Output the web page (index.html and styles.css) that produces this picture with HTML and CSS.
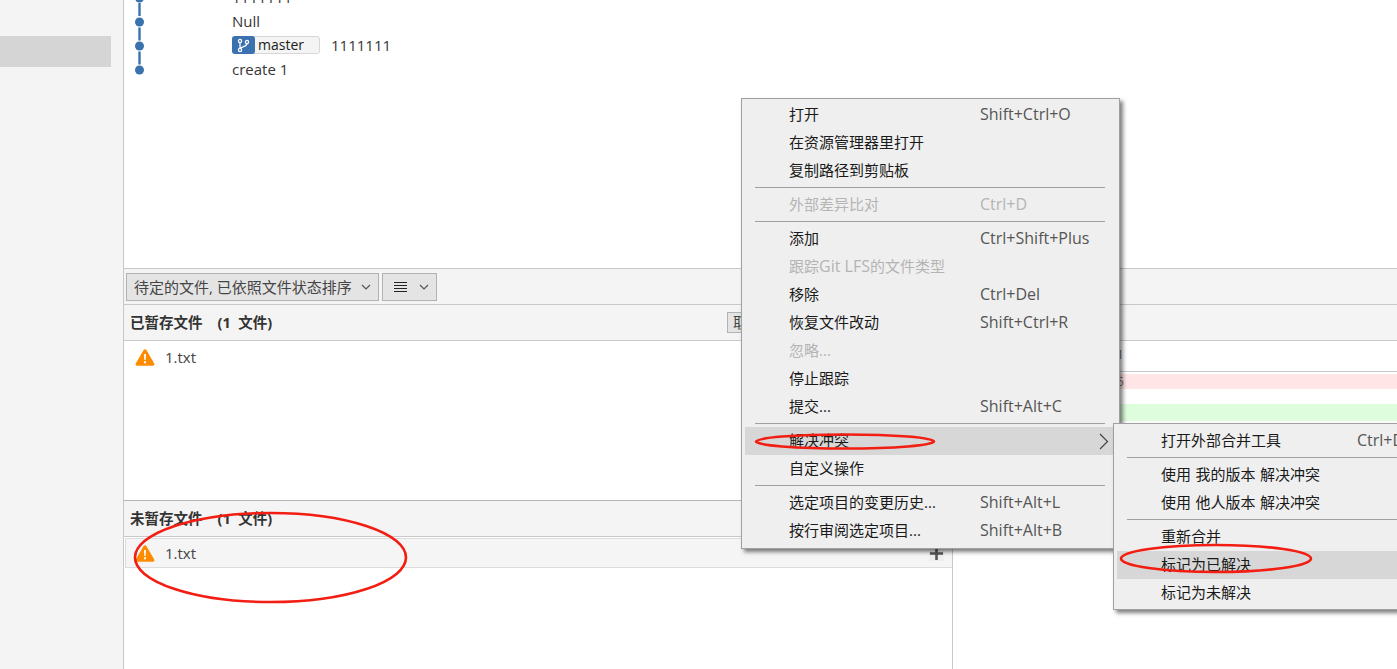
FILE: index.html
```html
<!DOCTYPE html>
<html lang="zh">
<head>
<meta charset="utf-8">
<title>Sourcetree</title>
<link rel="stylesheet" href="styles.css">
</head>
<body>
<div class="app">
  <aside class="sidebar"><div class="side-selected"></div></aside>
  <main class="main">
    <section class="history">
      <svg class="graph" width="32" height="90" viewBox="0 0 32 90" aria-hidden="true">
        <g class="graph-line">
          <line x1="15.5" y1="3" x2="15.5" y2="16"/>
          <line x1="15.5" y1="27.5" x2="15.5" y2="40.5"/>
          <line x1="15.5" y1="51.5" x2="15.5" y2="64.5"/>
        </g>
        <g class="graph-dot">
          <circle cx="15.5" cy="-2" r="4.5"/>
          <circle cx="15.5" cy="22" r="4.5"/>
          <circle cx="15.5" cy="46" r="4.5"/>
          <circle cx="15.5" cy="70" r="4.5"/>
        </g>
      </svg>
      <div class="commits">
        <div class="commit">1111111</div>
        <div class="commit">Null</div>
        <div class="commit">
          <span class="badge">
            <span class="badge-icon">
              <svg width="23" height="18" viewBox="0 0 23 18" fill="none" stroke="#fff" stroke-width="1.3" aria-hidden="true">
                <circle cx="8" cy="5" r="1.6"/><circle cx="15" cy="6" r="1.6"/><circle cx="8" cy="14" r="1.6"/>
                <path d="M8 6.6V12.4M15 7.6C15 11 9.5 10 8.6 12.6"/>
              </svg>
            </span>
            <span class="badge-name">master</span>
          </span>
          <span class="commit-msg">1111111</span>
        </div>
        <div class="commit">create 1</div>
      </div>
    </section>

    <section class="toolbar">
      <div class="select select-wide">
        <span>待定的文件, 已依照文件状态排序</span>
        <svg class="chev" width="10" height="6" viewBox="0 0 10 6" aria-hidden="true"><path d="M1 1l4 4 4-4"/></svg>
      </div>
      <div class="select select-narrow">
        <svg class="burger" width="13" height="12" viewBox="0 0 13 12" aria-hidden="true"><path d="M0 1.5h13M0 4.5h13M0 7.5h13M0 10.5h13"/></svg>
        <svg class="chev" width="10" height="6" viewBox="0 0 10 6" aria-hidden="true"><path d="M1 1l4 4 4-4"/></svg>
      </div>
    </section>

    <section class="split">
      <div class="files">
        <div class="pane-head">
          <strong class="pane-title">已暂存文件&nbsp;&nbsp;&nbsp; (1&nbsp; 文件)</strong>
          <span class="head-btn">取消暂存全部</span>
        </div>
        <div class="file-list staged">
          <div class="file-row">
            <svg class="warn" width="20" height="18" viewBox="0 0 20 18" aria-hidden="true"><path class="warn-bg" d="M10 1.2a1.6 1.6 0 0 1 1.4.8l7.8 13.4a1.5 1.5 0 0 1-1.3 2.3H2.1a1.5 1.5 0 0 1-1.3-2.3L8.6 2a1.6 1.6 0 0 1 1.4-.8z"/><path class="warn-mark" d="M9 6h2l-.3 6h-1.4zM9 13.3h2v2H9z"/></svg>
            <span>1.txt</span>
          </div>
        </div>
        <div class="pane-head unstaged-head">
          <strong class="pane-title">未暂存文件&nbsp;&nbsp;&nbsp; (1&nbsp; 文件)</strong>
        </div>
        <div class="file-list">
          <div class="file-row file-row-active">
            <svg class="warn" width="20" height="18" viewBox="0 0 20 18" aria-hidden="true"><path class="warn-bg" d="M10 1.2a1.6 1.6 0 0 1 1.4.8l7.8 13.4a1.5 1.5 0 0 1-1.3 2.3H2.1a1.5 1.5 0 0 1-1.3-2.3L8.6 2a1.6 1.6 0 0 1 1.4-.8z"/><path class="warn-mark" d="M9 6h2l-.3 6h-1.4zM9 13.3h2v2H9z"/></svg>
            <span>1.txt</span>
            <span class="add-btn">
              <svg width="13" height="13" viewBox="0 0 13 13" aria-hidden="true"><path d="M6.5 0v13M0 6.5h13"/></svg>
            </span>
          </div>
        </div>
      </div>
      <div class="diff">
        <div class="pane-head"></div>
        <div class="hunk"><span class="gutter">1</span></div>
        <div class="diff-line removed"><span class="gutter">5</span></div>
        <div class="diff-line"></div>
        <div class="diff-line added"></div>
      </div>
    </section>
  </main>
</div>

<div class="menu menu-main">
  <div class="mi"><span class="mi-label">打开</span><span class="mi-key">Shift+Ctrl+O</span></div>
  <div class="mi"><span class="mi-label">在资源管理器里打开</span></div>
  <div class="mi"><span class="mi-label">复制路径到剪贴板</span></div>
  <div class="sep"></div>
  <div class="mi off"><span class="mi-label">外部差异比对</span><span class="mi-key">Ctrl+D</span></div>
  <div class="sep"></div>
  <div class="mi"><span class="mi-label">添加</span><span class="mi-key">Ctrl+Shift+Plus</span></div>
  <div class="mi off"><span class="mi-label">跟踪<span class="latin">Git LFS</span>的文件类型</span></div>
  <div class="mi"><span class="mi-label">移除</span><span class="mi-key">Ctrl+Del</span></div>
  <div class="mi"><span class="mi-label">恢复文件改动</span><span class="mi-key">Shift+Ctrl+R</span></div>
  <div class="mi off"><span class="mi-label">忽略...</span></div>
  <div class="mi"><span class="mi-label">停止跟踪</span></div>
  <div class="mi"><span class="mi-label">提交...</span><span class="mi-key">Shift+Alt+C</span></div>
  <div class="sep"></div>
  <div class="mi hot"><span class="mi-label">解决冲突</span>
    <svg class="mi-arrow" width="10" height="17" viewBox="0 0 10 17" aria-hidden="true"><path d="M1 1l7.5 7.5L1 16"/></svg>
  </div>
  <div class="mi"><span class="mi-label">自定义操作</span></div>
  <div class="sep"></div>
  <div class="mi"><span class="mi-label">选定项目的变更历史...</span><span class="mi-key">Shift+Alt+L</span></div>
  <div class="mi"><span class="mi-label">按行审阅选定项目...</span><span class="mi-key">Shift+Alt+B</span></div>
</div>

<div class="menu menu-sub">
  <div class="mi"><span class="mi-label">打开外部合并工具</span><span class="mi-key">Ctrl+D</span></div>
  <div class="sep"></div>
  <div class="mi"><span class="mi-label">使用 我的版本 解决冲突</span></div>
  <div class="mi"><span class="mi-label">使用 他人版本 解决冲突</span></div>
  <div class="sep"></div>
  <div class="mi"><span class="mi-label">重新合并</span></div>
  <div class="mi hot"><span class="mi-label">标记为已解决</span></div>
  <div class="mi"><span class="mi-label">标记为未解决</span></div>
</div>

<svg class="marks" width="1397" height="669" viewBox="0 0 1397 669" aria-hidden="true">
  <ellipse cx="270.5" cy="557.5" rx="135.5" ry="44.5"/>
  <ellipse cx="845" cy="441.5" rx="89" ry="7"/>
  <ellipse cx="1216" cy="558.5" rx="95" ry="13.5"/>
</svg>
</body>
</html>
```

FILE: styles.css
```css
* { box-sizing: border-box; }

html, body {
  margin: 0;
  height: 669px;
  overflow: hidden;
  background: #fff;
}

body {
  position: relative;
  font: 15px/20px "Open Sans", "Noto Sans CJK SC", sans-serif;
  color: #363636;
}

.app {
  display: flex;
  height: 669px;
}

.sidebar {
  width: 124px;
  flex: none;
  padding-top: 36px;
  background: #f4f4f4;
  border-right: 1px solid #c8c8c8;
}

.side-selected {
  width: 111px;
  height: 31px;
  background: #d5d5d5;
}

.main {
  flex: 1;
  min-width: 0;
  display: flex;
  flex-direction: column;
}

.history {
  height: 268px;
  flex: none;
  display: flex;
  overflow: hidden;
}

.graph {
  flex: none;
  overflow: visible;
}

.graph-line line {
  stroke: #3a72ad;
  stroke-width: 2.4;
}

.graph-dot circle {
  fill: #3a72ad;
}

.commits {
  margin: -14px 0 0 76px;
}

.commit {
  height: 24px;
  display: flex;
  align-items: center;
  padding-bottom: 2px;
}

.badge {
  display: flex;
  width: 88px;
  height: 18px;
  border: 1px solid #d6d6d6;
  border-radius: 3px;
  background: #f4f4f4;
  color: #1c1c1c;
  line-height: 16px;
}

.badge-icon {
  width: 23px;
  height: 18px;
  margin: -1px 0 0 -1px;
  flex: none;
  background: #3a71ae;
  border-radius: 3px;
}

.badge-icon svg { display: block; }

.badge-name {
  margin-left: 3px;
  font-size: 14px;
}

.commit-msg { margin-left: 11px; }

.toolbar {
  height: 37px;
  flex: none;
  display: flex;
  gap: 3px;
  padding: 4px 0 0 2px;
  background: #f4f4f4;
  border-top: 1px solid #c8c8c8;
  border-bottom: 1px solid #c8c8c8;
}

.select {
  height: 28px;
  display: flex;
  align-items: center;
  justify-content: space-between;
  background: #e4e4e4;
  border: 1px solid #b2b2b2;
  color: #444;
}

.select-wide { width: 253px; padding: 0 7px; }
.select-narrow { width: 55px; padding: 0 7px 0 11px; }

.chev path {
  fill: none;
  stroke: #555;
  stroke-width: 1.2;
}

.burger path {
  fill: none;
  stroke: #222;
  stroke-width: 1;
}

.split {
  flex: 1;
  min-height: 0;
  display: flex;
}

.files {
  width: 828px;
  flex: none;
  display: flex;
  flex-direction: column;
}

.diff {
  flex: 1;
  min-width: 0;
  border-left: 1px solid #c8c8c8;
}

.pane-head {
  height: 36px;
  display: flex;
  align-items: center;
  justify-content: space-between;
  padding: 0 12px 0 6px;
  background: #f4f4f4;
  border-bottom: 1px solid #c8c8c8;
}

.pane-title {
  font-size: 14.5px;
  font-weight: 700;
  color: #333;
}

.head-btn {
  width: 213px;
  height: 21px;
  padding-left: 5px;
  line-height: 19px;
  background: #e4e4e4;
  border: 1px solid #b2b2b2;
  color: #444;
}

.file-list { flex: none; }

.staged {
  height: 160px;
  border-bottom: 1px solid #b5b5b5;
}

.file-row {
  position: relative;
  height: 30px;
  display: flex;
  align-items: center;
  gap: 10px;
  margin-top: 1px;
  padding-left: 11px;
  color: #444;
}

.file-row-active {
  margin-left: 1px;
  padding-left: 9px;
  background: #f5f5f5;
  border: 1px solid #dcdcdc;
  border-right: 0;
}

.warn-bg { fill: #ff8c00; }
.warn-mark { fill: #fff; }

.add-btn {
  margin-left: auto;
  width: 15px;
  height: 16px;
  margin-right: 8px;
  display: flex;
  align-items: center;
  justify-content: center;
  background: #eee;
}

.add-btn path {
  stroke: #555;
  stroke-width: 2.6;
  fill: none;
}

.hunk {
  height: 31px;
  padding-top: 3px;
  border-bottom: 1px solid #c8c8c8;
  margin-bottom: 2px;
}

.gutter {
  display: block;
  width: 171px;
  text-align: right;
  font-size: 13px;
  line-height: 20px;
  color: #777;
}

.diff-line {
  height: 15px;
}

.diff-line .gutter { line-height: 15px; }

.removed { background: #ffe5e5; }
.added { height: 17px; background: #ddfddd; }

/* context menus sit over the window */
.menu {
  position: absolute;
  background: #efefef;
  border: 1px solid #a0a0a0;
  box-shadow: 3px 3px 4px rgba(0, 0, 0, .5);
  color: #1a1a1a;
}

.menu-main {
  left: 741px;
  top: 98px;
  width: 379px;
  padding: 2px 3px 3px;
}

.menu-sub {
  left: 1113px;
  top: 423px;
  width: 400px;
  padding: 3px 3px 2px;
}

.mi {
  position: relative;
  height: 28px;
  display: flex;
  align-items: center;
  padding: 0 0 2px 44px;
}

.mi-label { width: 191px; flex: none; white-space: nowrap; }

.menu-sub .mi-label { width: 196px; word-spacing: .6px; }

.latin { font-size: 16px; }

.mi-key {
  white-space: nowrap;
  font-size: 16px;
  color: #555;
}

.off,
.off .mi-key { color: #b4b4b4; }

.hot { background: #d7d7d7; }

.mi-arrow {
  position: absolute;
  right: 7px;
  top: 6px;
}

.mi-arrow path {
  fill: none;
  stroke: #444;
  stroke-width: 1.2;
}

.sep {
  height: 1px;
  margin: 2px 11px 3px 10px;
  background: #a0a0a0;
}

/* hand-drawn annotation rings */
.marks {
  position: absolute;
  left: 0;
  top: 0;
  pointer-events: none;
}

.marks ellipse {
  fill: none;
  stroke: #f31d12;
  stroke-width: 2.6;
}
```
